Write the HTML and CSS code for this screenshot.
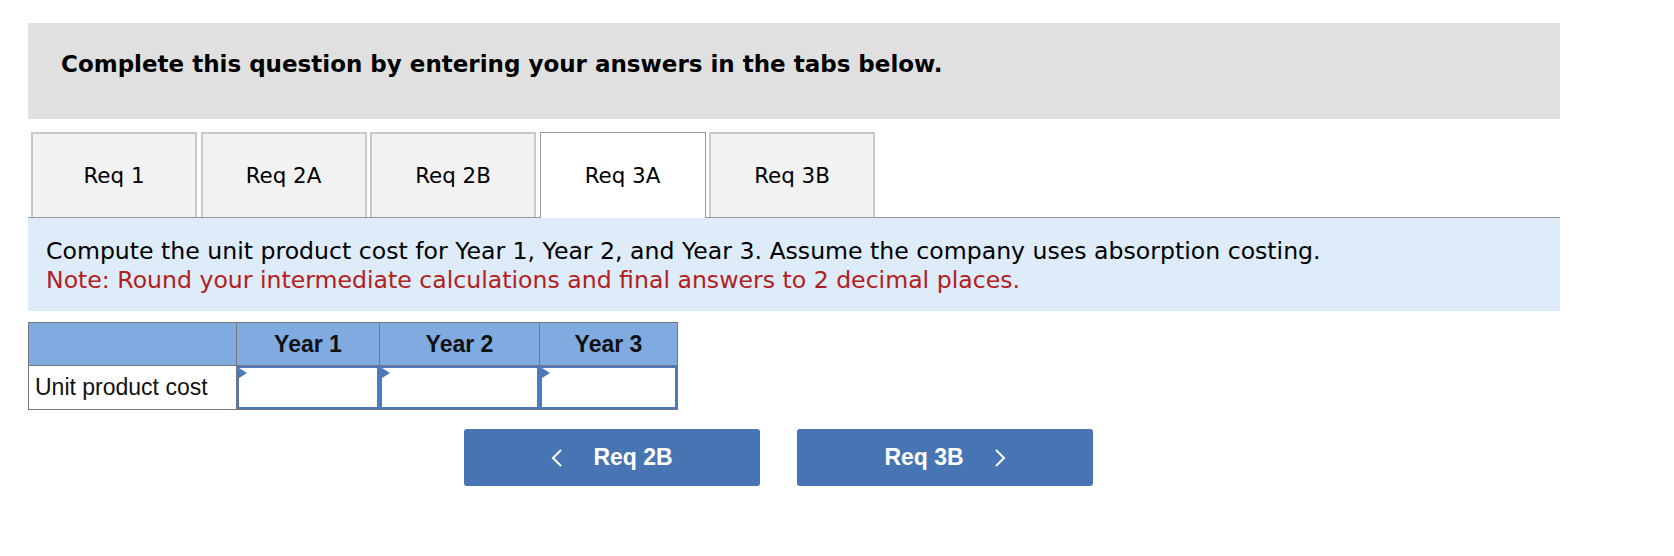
FILE: index.html
```html
<!DOCTYPE html>
<html>
<head>
<meta charset="utf-8">
<link rel="stylesheet" href="styles.css">
</head>
<body>
<div class="page">
  <div class="banner">Complete this question by entering your answers in the tabs below.</div>
  <div class="tabs">
    <div class="tab">Req 1</div>
    <div class="tab">Req 2A</div>
    <div class="tab">Req 2B</div>
    <div class="tab active">Req 3A</div>
    <div class="tab">Req 3B</div>
  </div>
  <div class="panel">
    <div class="q">Compute the unit product cost for Year 1, Year 2, and Year 3. Assume the company uses absorption costing.</div>
    <div class="note">Note: Round your intermediate calculations and final answers to 2 decimal places.</div>
  </div>
  <table class="grid">
    <tr class="head">
      <th class="c0"></th>
      <th class="c1">Year 1</th>
      <th class="c2">Year 2</th>
      <th class="c3">Year 3</th>
    </tr>
    <tr>
      <td class="label">Unit product cost</td>
      <td class="inp"><div class="box"><span class="tri"></span></div></td>
      <td class="inp"><div class="box"><span class="tri"></span></div></td>
      <td class="inp"><div class="box"><span class="tri"></span></div></td>
    </tr>
  </table>
  <div class="nav">
    <div class="btn">
      <svg class="chev" width="12" height="20" viewBox="0 0 12 20"><polyline points="10,2 2,10 10,18" fill="none" stroke="#fff" stroke-width="2"/></svg>
      <span>Req 2B</span>
    </div>
    <div class="btn">
      <span>Req 3B</span>
      <svg class="chev" width="12" height="20" viewBox="0 0 12 20"><polyline points="2,2 10,10 2,18" fill="none" stroke="#fff" stroke-width="2"/></svg>
    </div>
  </div>
</div>
</body>
</html>
```
FILE: styles.css
```css
body {
  margin: 0;
  background: #fff;
  font-family: "DejaVu Sans", Verdana, sans-serif;
}
.page {
  padding: 23px 0 0 28px;
  width: 1532px;
}
.banner {
  height: 96px;
  box-sizing: border-box;
  background: #e0e0e0;
  padding: 27px 0 0 33px;
  font-weight: bold;
  font-size: 23px;
  line-height: 28px;
  color: #000;
}
.tabs {
  display: flex;
  gap: 3.5px;
  padding: 13px 0 0 3px;
}
.tab {
  width: 166px;
  height: 85px;
  box-sizing: border-box;
  background: #f2f2f2;
  border: 2px solid #c8c8c8;
  border-bottom: none;
  display: flex;
  align-items: center;
  justify-content: center;
  font-size: 21.4px;
  color: #000;
}
.tab.active {
  background: #fff;
  border: 1px solid #999;
  border-bottom: none;
  position: relative;
  z-index: 1;
  height: 86px;
  margin-bottom: -1px;
}
.panel {
  border-top: 1px solid #999;
  background: #deebf8;
  height: 94px;
  box-sizing: border-box;
  padding: 19px 0 0 18px;
  font-size: 23.6px;
  line-height: 29px;
}
.q { color: #000; }
.note { color: #b2201d; }
.grid {
  margin-top: 11px;
  border-collapse: collapse;
  font-family: "Liberation Sans", Arial, sans-serif;
  font-size: 23px;
}
.grid th, .grid td {
  border: 1px solid #777;
  padding: 0;
}
.head th {
  background: #80abe0;
  height: 42px;
  font-weight: bold;
  color: #111;
  text-align: center;
}
.c0 { width: 207px; }
.c1 { width: 142px; }
.c2 { width: 159px; }
.c3 { width: 137px; }
.label {
  height: 43px;
  padding-left: 6px !important;
  color: #111;
}
.inp { vertical-align: top; }
.box {
  height: 43px;
  box-sizing: border-box;
  border: 2px solid #4d78b9;
  background: #fff;
  position: relative;
}
.tri {
  position: absolute;
  left: 0;
  top: 0;
  width: 0;
  height: 0;
  border-top: 5px solid transparent;
  border-bottom: 5px solid transparent;
  border-left: 8px solid #4d78b9;
}
.nav {
  display: flex;
  gap: 37px;
  padding: 19px 0 0 436px;
}
.btn {
  width: 296px;
  height: 57px;
  background: #4775b3;
  border-radius: 3px;
  color: #fff;
  display: flex;
  align-items: center;
  justify-content: center;
  gap: 30px;
  font-family: "Liberation Sans", Arial, sans-serif;
  font-weight: bold;
  font-size: 23px;
}
.chev {
  display: block;
}
```
